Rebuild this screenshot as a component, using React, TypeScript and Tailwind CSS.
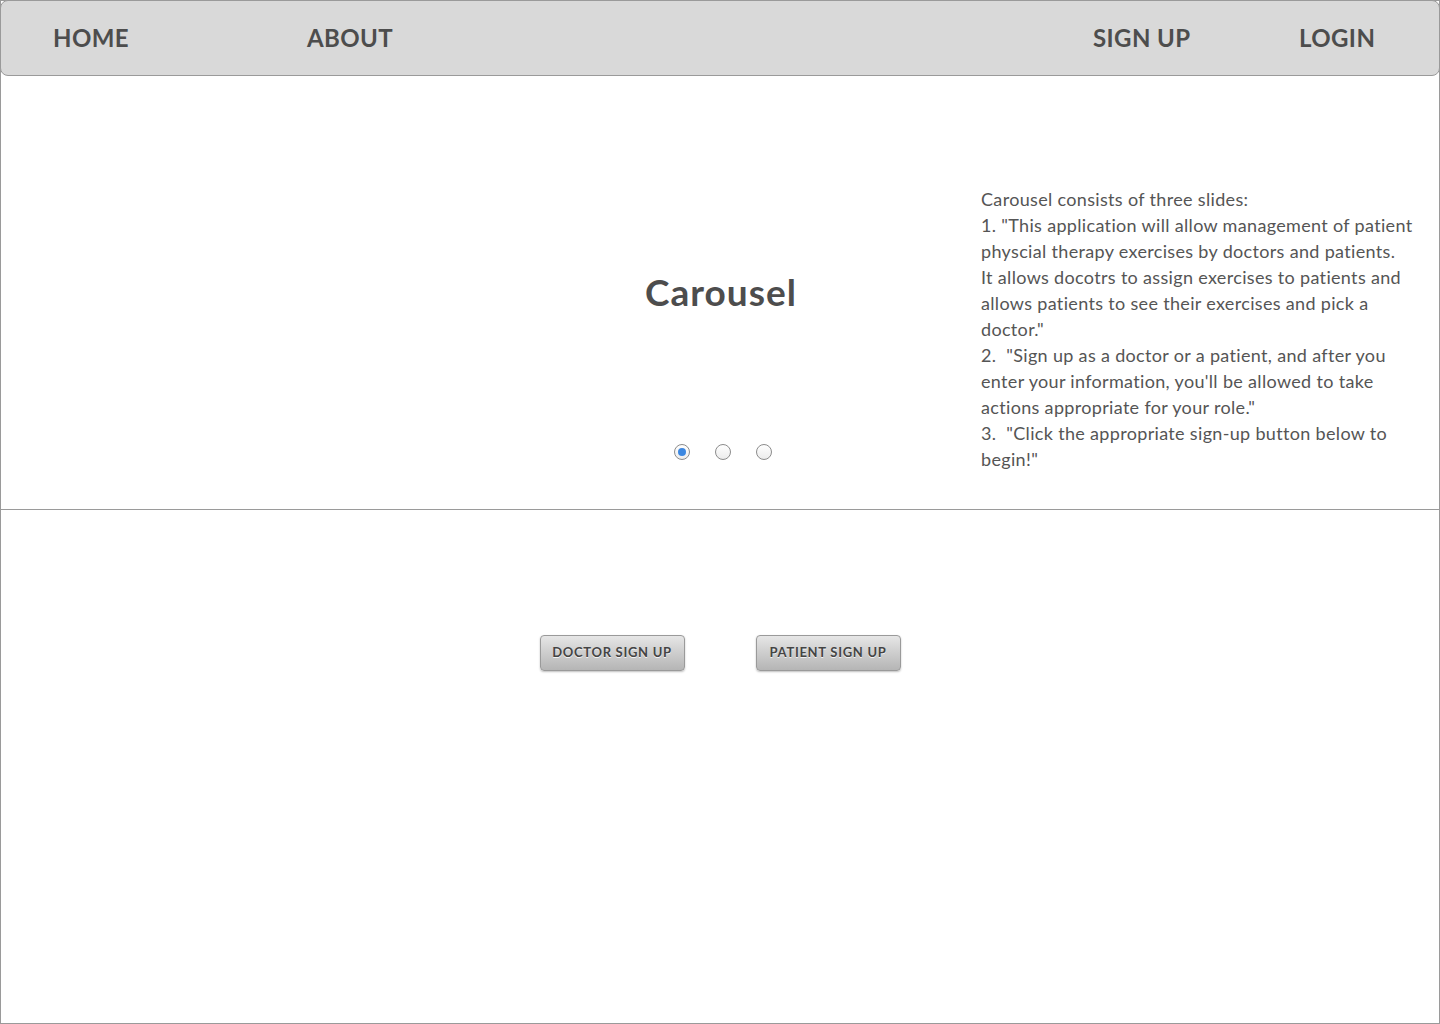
import React from "react";

const NAV_LEFT = [
  { label: "HOME", width: "w-[254px]" },
  { label: "ABOUT", width: "" },
];

const NAV_RIGHT = [
  { label: "SIGN UP", width: "w-[206px]" },
  { label: "LOGIN", width: "w-[140px]" },
];

const SLIDE_LINES = [
  "Carousel consists of three slides:",
  '1. "This application will allow management of patient',
  "physcial therapy exercises by doctors and patients.",
  "It allows docotrs to assign exercises to patients and",
  "allows patients to see their exercises and pick a",
  'doctor."',
  '2.  "Sign up as a doctor or a patient, and after you',
  "enter your information, you'll be allowed to take",
  'actions appropriate for your role."',
  '3.  "Click the appropriate sign-up button below to',
  'begin!"',
];

function RadioDot({ checked }: { checked?: boolean }) {
  return (
    <span className="flex h-4 w-4 items-center justify-center rounded-full border border-[#8c8c8c] bg-gradient-to-b from-white to-[#ececec]">
      {checked && <span className="h-2 w-2 rounded-full bg-[#3c87e0]" />}
    </span>
  );
}

function SignUpButton({ label }: { label: string }) {
  return (
    <button className="h-[36px] w-[145px] rounded-[4px] border border-[#9a9a9a] bg-gradient-to-b from-[#e6e6e6] to-[#b5b5b5] text-[13px] font-bold tracking-[0.7px] text-[#444] shadow-[0_1px_2px_rgba(0,0,0,0.25)] [text-shadow:0_1px_0_rgba(255,255,255,0.8)]">
      {label}
    </button>
  );
}

export default function App() {
  return (
    <div className="flex h-[1024px] w-[1440px] flex-col border border-[#9a9a9a] bg-white font-['Lato','Noto_Sans',sans-serif] text-[#4d4d4d]">
      <nav className="-mx-px -mt-px flex h-[76px] shrink-0 items-center rounded-[8px] border border-[#9a9a9a] bg-[#d9d9d9] pl-[52px] text-[24px] font-bold tracking-[0.4px]">
        {NAV_LEFT.map((item) => (
          <span key={item.label} className={item.width}>
            {item.label}
          </span>
        ))}
        <span className="flex-1" />
        {NAV_RIGHT.map((item) => (
          <span key={item.label} className={item.width}>
            {item.label}
          </span>
        ))}
      </nav>

      <section className="grid h-[434px] shrink-0 grid-cols-[980px_1fr] border-b border-[#9a9a9a]">
        <div className="flex flex-col items-center pl-[460px] pt-[194px]">
          <h1 className="text-[37px] font-bold leading-[44px] tracking-[1px]">Carousel</h1>
          <div className="mt-[130px] flex gap-[25px] pl-[3px]">
            <RadioDot checked />
            <RadioDot />
            <RadioDot />
          </div>
        </div>
        <div className="pt-[110px] text-[18px] leading-[26px] tracking-[0.33px] text-[#555]">
          {SLIDE_LINES.map((line, i) => (
            <div key={i} className="whitespace-pre">
              {line}
            </div>
          ))}
        </div>
      </section>

      <section className="flex justify-center gap-[71px] pt-[125px]">
        <SignUpButton label="DOCTOR SIGN UP" />
        <SignUpButton label="PATIENT SIGN UP" />
      </section>
    </div>
  );
}
